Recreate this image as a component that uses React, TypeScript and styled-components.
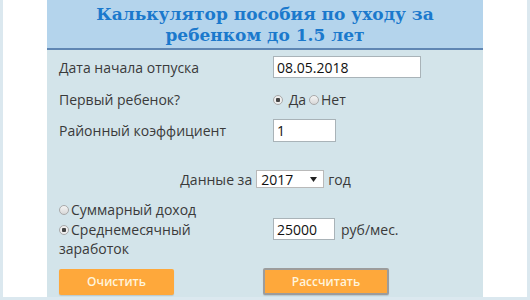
import React from 'react'
import styled, { createGlobalStyle } from 'styled-components'

const Global = createGlobalStyle`
  html, body { margin: 0; padding: 0; background: #fff; }
  body { font-family: "Open Sans", "DejaVu Sans", sans-serif; }
`

const Page = styled.div`
  width: 530px;
  height: 300px;
  box-sizing: border-box;
  border: 3px solid #dbe8ef;
  border-top: none;
  overflow: hidden;
`

const Panel = styled.div`
  width: 436px;
  height: 100%;
  margin-left: 44px;
  background: #d3e4ea;
`

const Header = styled.div`
  height: 48px;
  background: #b4d4ec;
  border-bottom: 2px solid #5f86b3;
  display: flex;
  align-items: center;
  justify-content: center;
  text-align: center;
`

const Title = styled.h1`
  margin: 2px 0 0;
  font-family: "DejaVu Serif", serif;
  font-weight: bold;
  font-size: 17px;
  line-height: 21px;
  color: #1b79cc;
`

const Body = styled.div`
  padding: 6px 11px 0 12px;
  display: flex;
  flex-direction: column;
`

const Row = styled.div<{ $top?: number; $h?: number }>`
  display: grid;
  grid-template-columns: 214px 1fr;
  align-items: center;
  margin-top: ${p => p.$top ?? 0}px;
  min-height: ${p => p.$h ?? 20}px;
`

const Label = styled.span`
  font-size: 14px;
  color: #3a3a3a;
  line-height: 19px;
`

const TextInput = styled.input<{ $w: number; $h?: number }>`
  width: ${p => p.$w}px;
  height: ${p => p.$h ?? 22}px;
  box-sizing: border-box;
  border: 1px solid #a9b3b8;
  background: #fff;
  padding: 0 3px;
  font-family: "Open Sans", sans-serif;
  font-size: 14px;
  color: #111;
  outline: none;
`

const Radio = styled.span<{ $on?: boolean }>`
  display: inline-block;
  width: 8px;
  height: 8px;
  border-radius: 50%;
  border: 1px solid #a9a9a9;
  background: ${p => (p.$on ? 'radial-gradient(circle, #444 0 2px, #eee 2.5px)' : 'linear-gradient(#f4f4f4, #d8d8d8)')};
  margin-right: 2px;
  vertical-align: middle;
  position: relative;
  top: -1px;
`

const Choice = styled.label`
  font-size: 14px;
  color: #3a3a3a;
  margin-right: 3px;
`

const YearRow = styled.div`
  margin-top: 28px;
  height: 18px;
  display: flex;
  align-items: center;
  justify-content: center;
  gap: 4px;
  font-size: 14px;
  color: #3a3a3a;
`

const SelectBox = styled.div`
  width: 68px;
  height: 18px;
  box-sizing: border-box;
  border: 1px solid #b9b9b9;
  background: #fff;
  display: flex;
  align-items: center;
  justify-content: space-between;
  padding: 0 6px 0 4px;
  font-size: 14px;
  color: #111;
`

const IncomeRow = styled.div`
  display: grid;
  grid-template-columns: 214px auto 1fr;
  align-items: start;
  margin-top: 1px;
`

const Wrap = styled.span`
  font-size: 14px;
  line-height: 19px;
  color: #3a3a3a;
  width: 200px;
`

const Unit = styled.span`
  font-size: 14px;
  color: #3a3a3a;
  margin-left: 6px;
  line-height: 19px;
`

const Buttons = styled.div`
  display: flex;
  gap: 89px;
  align-items: center;
  margin-top: 10px;
`

const Btn = styled.button<{ $ring?: boolean; $w: number }>`
  width: ${p => p.$w}px;
  height: ${p => (p.$ring ? 27 : 26)}px;
  box-sizing: border-box;
  border: ${p => (p.$ring ? '2px solid #9c9c9c' : 'none')};
  border-radius: 2px;
  background: #fea83b;
  color: #fff4dc;
  font-family: "Open Sans", sans-serif;
  font-size: 12px;
  font-weight: 600;
  box-shadow: 0 1px 1px rgba(0,0,0,0.12);
`

export default function App() {
  return (
    <>
      <Global />
      <Page>
        <Panel>
          <Header>
            <Title>Калькулятор пособия по уходу за<br />ребенком до 1.5 лет</Title>
          </Header>
          <Body>
            <Row $h={22}>
              <Label>Дата начала отпуска</Label>
              <TextInput $w={148} defaultValue="08.05.2018" />
            </Row>
            <Row $top={10} $h={20}>
              <Label>Первый ребенок?</Label>
              <div>
                <Choice><Radio $on /> Да</Choice>
                <Choice><Radio />Нет</Choice>
              </div>
            </Row>
            <Row $top={9} $h={23}>
              <Label>Районный коэффициент</Label>
              <TextInput $w={63} $h={23} defaultValue="1" />
            </Row>
            <YearRow>
              <span>Данные за</span>
              <SelectBox>
                <span>2017</span>
                <svg width="7" height="5" viewBox="0 0 7 5"><path d="M0 0h7L3.5 5z" fill="#222" /></svg>
              </SelectBox>
              <span>год</span>
            </YearRow>
            <Row $top={12} $h={19}>
              <Label><Radio />Суммарный доход</Label>
            </Row>
            <IncomeRow>
              <Wrap><Radio $on />Среднемесячный заработок</Wrap>
              <TextInput $w={62} style={{ marginTop: -2 }} defaultValue="25000" />
              <Unit>руб/мес.</Unit>
            </IncomeRow>
            <Buttons>
              <Btn $w={115}>Очистить</Btn>
              <Btn $w={126} $ring>Рассчитать</Btn>
            </Buttons>
          </Body>
        </Panel>
      </Page>
    </>
  )
}
